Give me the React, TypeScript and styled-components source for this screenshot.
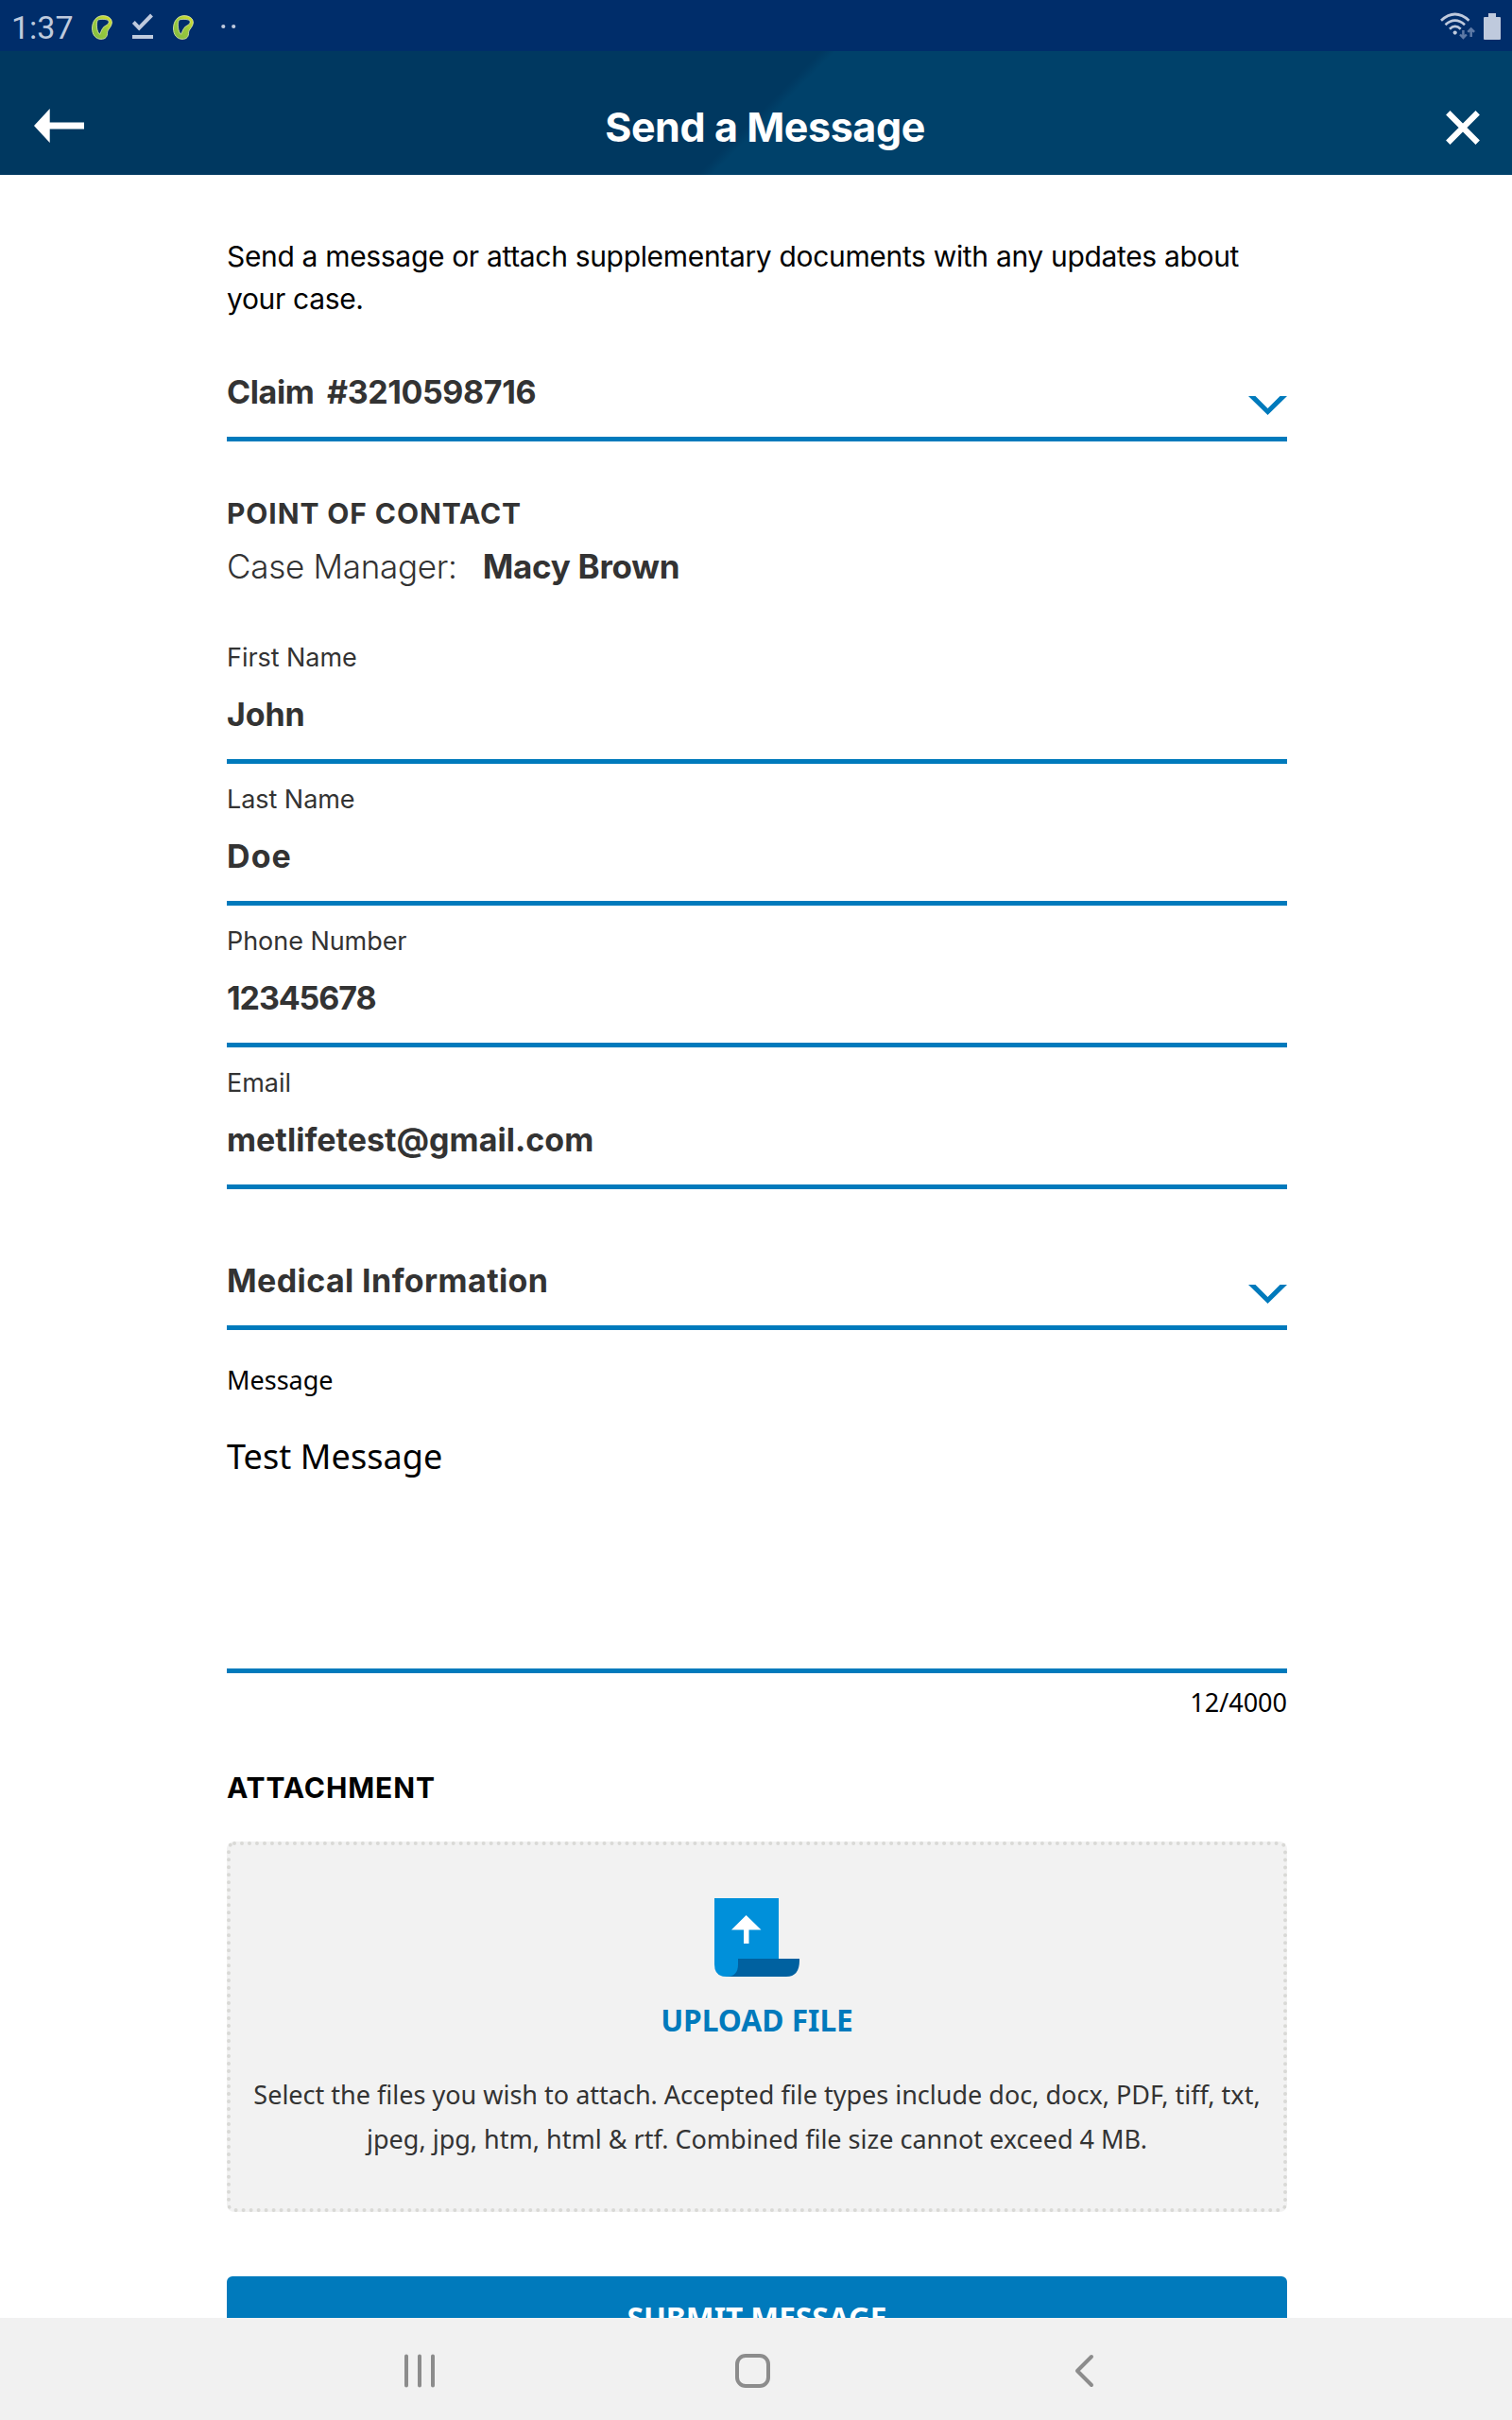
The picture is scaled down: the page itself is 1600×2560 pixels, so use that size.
import React from "react";
import styled, { createGlobalStyle } from "styled-components";

const blue = "#007abc";
const brandFont = `Inter, "Liberation Sans", sans-serif`;
const systemFont = `"Noto Sans", "Liberation Sans", sans-serif`;

const GlobalStyle = createGlobalStyle`
  * { box-sizing: border-box; }
  body { margin: 0; background: #fff; }
  svg { display: block; flex: none; }
`;

const Screen = styled.div`
  width: 1600px;
  height: 2560px;
  display: flex;
  flex-direction: column;
  overflow: hidden;
  background: #fff;
  color: #333;
  font-family: ${brandFont};
`;

const StatusBar = styled.div`
  height: 54px;
  flex: none;
  display: flex;
  justify-content: space-between;
  align-items: flex-start;
  padding: 13px 12px 0 12px;
  background: #002d6a;
  color: #bfcadd;
`;

const StatusGroup = styled.div<{ $gap: number }>`
  display: flex;
  align-items: flex-start;
  gap: ${(p) => p.$gap}px;
`;

const StatusIcon = styled.span`
  padding-top: 3px;
`;

const DotsSlot = styled.span`
  margin-left: 7px;
`;

const Clock = styled.span`
  width: 63px;
  font: 400 34px/32px Roboto, sans-serif;
`;

const AppBar = styled.header`
  height: 131px;
  flex: none;
  display: flex;
  justify-content: space-between;
  align-items: flex-start;
  padding: 54px 34px 0 36px;
  background: linear-gradient(135deg, #003860 50.2%, #00416a 51.1%);
  color: #fff;
`;

const Title = styled.h1`
  margin: 0;
  font-size: 43px;
  line-height: 52px;
  font-weight: 700;
  letter-spacing: -0.42px;
`;

const BarButton = styled.button<{ $top: number }>`
  margin: ${(p) => p.$top}px 0 0;
  padding: 0;
  border: 0;
  background: none;
  color: inherit;
`;

const Main = styled.main`
  flex: 1;
  min-height: 0;
  overflow: hidden;
  padding: 64px 238px 0 240px;
  display: flex;
  flex-direction: column;
`;

const Intro = styled.p`
  margin: 0 0 54px;
  flex: none;
  color: #000;
  font-size: 30px;
  line-height: 45px;
  letter-spacing: -0.33px;
`;

const SelectRow = styled.div`
  flex: none;
  display: flex;
  justify-content: space-between;
  align-items: flex-start;
  height: 74px;
  border-bottom: 5px solid ${blue};
`;

const Value = styled.span<{ $spacing?: number; $wordSpacing?: number }>`
  font-size: 34px;
  line-height: 44px;
  font-weight: 700;
  letter-spacing: ${(p) => p.$spacing ?? 0}px;
  word-spacing: ${(p) => p.$wordSpacing ?? 0}px;
`;

const ChevronBox = styled.span`
  margin-top: 26px;
`;

const SectionTitle = styled.h2<{ $color?: string }>`
  margin: 0;
  flex: none;
  color: ${(p) => p.$color ?? "#333"};
  font-size: 30px;
  line-height: 40px;
  font-weight: 700;
  letter-spacing: 0.89px;
`;

const Contact = styled.section`
  flex: none;
  margin: 56px 0 36px;
  display: flex;
  flex-direction: column;
  gap: 13px;
`;

const Manager = styled.div`
  display: flex;
  gap: 27px;
  font-size: 35px;
  line-height: 46px;
  font-weight: 300;
  letter-spacing: -0.28px;

  strong {
    font-weight: 700;
  }
`;

const FieldList = styled.div`
  flex: none;
  margin-bottom: 75px;
`;

const FieldBox = styled.div`
  height: 150px;
  padding-top: 20px;
  display: flex;
  flex-direction: column;
  gap: 20px;
  border-bottom: 5px solid ${blue};
`;

const FieldLabel = styled.label`
  font-size: 27px;
  line-height: 36px;
  letter-spacing: -0.05px;
`;

const MessageBlock = styled.section`
  flex: none;
  display: flex;
  flex-direction: column;
  margin: 35px 0 52px;
  color: #000;
  font-family: ${systemFont};
  font-size: 27px;
  line-height: 36px;
`;

const MessageText = styled.div`
  height: 254px;
  margin: 38px 0 13px;
  border-bottom: 5px solid ${blue};
  font-size: 36px;
  line-height: 50px;
  letter-spacing: 0.08px;
`;

const Counter = styled.span`
  align-self: flex-end;
`;

const DropZone = styled.div`
  flex: none;
  height: 392px;
  margin: 37px 0 68px;
  padding: 56px 20px 0;
  display: flex;
  flex-direction: column;
  align-items: center;
  border: 4px dotted #d9d9d6;
  border-radius: 8px;
  background: #f2f2f2;
  font-family: ${systemFont};
  text-align: center;
`;

const UploadLabel = styled.span`
  margin: 24px 0 33px;
  color: ${blue};
  font-size: 31.7px;
  line-height: 44px;
  font-weight: 700;
`;

const Hint = styled.p`
  margin: 0;
  font-size: 27px;
  line-height: 47px;
`;

const Submit = styled.button`
  flex: none;
  height: 88px;
  padding: 0;
  border: 0;
  border-radius: 6px;
  background: ${blue};
  color: #fff;
  font: 700 31.6px/44px ${systemFont};
`;

const NavBar = styled.nav`
  height: 108px;
  flex: none;
  display: flex;
  align-items: flex-start;
  gap: 317px;
  padding: 38px 0 0 427px;
  background: #f1f1f1;
`;

const Swirl = ({ id }: { id: string }) => (
  <svg width="22" height="26" viewBox="0 0 22 26">
    <defs>
      <linearGradient id={id} x1="1" y1="0" x2="0.2" y2="1">
        <stop offset="0" stopColor="#dfe32a" />
        <stop offset="0.5" stopColor="#9cca3c" />
        <stop offset="1" stopColor="#84bd41" />
      </linearGradient>
    </defs>
    <path
      fill={`url(#${id})`}
      stroke="#e6efb0"
      strokeWidth="0.8"
      fillRule="evenodd"
      d="M12 .6C5 .6.5 6.500.5 14C.5 21 4.500 25.400 10 25.400C14.500 25.400 16.800 23 16.600 18C16.500 15.500 21.300 12.500 21.400 8C21.400 3.500 17.500.6 12 .6ZM6.300 5.300C8.500 3.800 18.300 3.900 18.300 7C18.300 10.500 13 11 11.300 14.500C10.300 16.800 9.300 18.500 8.600 20.300C5.200 17.500 4.500 9 6.300 5.300Z"
    />
  </svg>
);

const DownloadDone = () => (
  <svg width="22" height="28" viewBox="0 0 22 28">
    <path d="M1.300 10.500L7.200 16.700L20.500 3" fill="none" stroke="currentColor" strokeWidth="4" />
    <path d="M0 24H22V28.500H0Z" fill="currentColor" />
  </svg>
);

const MoreDots = () => (
  <svg width="16" height="28" viewBox="0 0 16 28">
    <circle cx="2.300" cy="15" r="2.100" fill="currentColor" />
    <circle cx="13.200" cy="15" r="2.100" fill="currentColor" />
  </svg>
);

const Wifi = () => (
  <svg width="37" height="30" viewBox="0 0 37 30">
    <g fill="none" stroke="currentColor" strokeWidth="2.700">
      <path d="M1 8.700Q15.700 -4.700 30.500 8.700" />
      <path d="M5.500 13.200Q15.700 4.200 26 13.200" />
      <path d="M10 17.700Q15.700 12.200 21.700 17.700" />
    </g>
    <circle cx="15.700" cy="21.600" r="2.100" fill="currentColor" />
    <g fill="none" stroke="#5e7aa6" strokeWidth="2.500">
      <path d="M24.400 19V27M21 23.500L24.400 27L27.800 23.500" />
      <path d="M32.700 26V18M29.300 20.800L32.700 17.400L36.100 20.800" />
    </g>
  </svg>
);

const Battery = () => (
  <svg width="18" height="29" viewBox="0 0 18 29">
    <path d="M5 1H13V5H17Q18 5 18 6V28Q18 29 17 29H1Q0 29 0 28V6Q0 5 1 5H5Z" fill="currentColor" />
  </svg>
);

const BackArrow = () => (
  <svg width="53" height="36" viewBox="0 0 53 36">
    <path d="M0 18L16.700 0V14.500H53V21.500H16.700V36Z" fill="currentColor" />
  </svg>
);

const Close = () => (
  <svg width="36" height="36" viewBox="0 0 36 36">
    <path d="M2.300 2.300L33.700 33.700M33.700 2.300L2.300 33.700" stroke="currentColor" strokeWidth="6.200" />
  </svg>
);

const Chevron = () => (
  <ChevronBox>
    <svg width="41" height="20" viewBox="0 0 41 20">
      <path d="M0 0H7.500L20.500 13L33.500 0H41L20.500 20Z" fill={blue} />
    </svg>
  </ChevronBox>
);

const UploadIcon = () => (
  <svg width="90" height="83" viewBox="0 0 90 83">
    <path d="M18 64H90V66Q90 83 76 83H12Z" fill="#0061a0" />
    <path d="M0 0H68V64H25V70Q25 83 12.500 83Q0 83 0 70Z" fill="#0090da" />
    <path d="M33.600 18L49.500 33.500H36.500V48H31V33.500H18Z" fill="#fff" />
  </svg>
);

const Recents = () => (
  <svg width="34" height="36" viewBox="0 0 34 36">
    <path d="M3 2.500V33.500M17 2.500V33.500M31 2.500V33.500" stroke="#8c8c8c" strokeWidth="4" strokeLinecap="round" />
  </svg>
);

const Home = () => (
  <svg width="38" height="36" viewBox="0 0 38 36">
    <rect x="2" y="2" width="33" height="32" rx="9" fill="none" stroke="#8c8c8c" strokeWidth="4" />
  </svg>
);

const Back = () => (
  <svg width="25" height="36" viewBox="0 0 25 36">
    <path d="M22 3L7 18L22 33" fill="none" stroke="#8c8c8c" strokeWidth="4" strokeLinecap="round" strokeLinejoin="round" />
  </svg>
);

const fields = [
  { label: "First Name", value: "John", spacing: -0.1 },
  { label: "Last Name", value: "Doe", spacing: 1.1 },
  { label: "Phone Number", value: "12345678", spacing: -1.1 },
  { label: "Email", value: "metlifetest@gmail.com", spacing: 0.03 },
];

export default function App() {
  return (
    <Screen>
      <GlobalStyle />
      <StatusBar>
        <StatusGroup $gap={22}>
          <Clock>1:37</Clock>
          <StatusGroup $gap={21}>
            <StatusIcon><Swirl id="swirl-a" /></StatusIcon>
            <DownloadDone />
            <StatusIcon><Swirl id="swirl-b" /></StatusIcon>
          </StatusGroup>
          <DotsSlot><MoreDots /></DotsSlot>
        </StatusGroup>
        <StatusGroup $gap={9}>
          <Wifi />
          <Battery />
        </StatusGroup>
      </StatusBar>
      <AppBar>
        <BarButton $top={7}><BackArrow /></BarButton>
        <Title>Send a Message</Title>
        <BarButton $top={9}><Close /></BarButton>
      </AppBar>
      <Main>
        <Intro>
          Send a message or attach supplementary documents with any updates about your case.
        </Intro>
        <SelectRow>
          <Value $spacing={-0.4} $wordSpacing={6}>Claim #3210598716</Value>
          <Chevron />
        </SelectRow>
        <Contact>
          <SectionTitle>POINT OF CONTACT</SectionTitle>
          <Manager>
            <span>Case Manager:</span>
            <strong>Macy Brown</strong>
          </Manager>
        </Contact>
        <FieldList>
          {fields.map((f) => (
            <FieldBox key={f.label}>
              <FieldLabel>{f.label}</FieldLabel>
              <Value $spacing={f.spacing}>{f.value}</Value>
            </FieldBox>
          ))}
        </FieldList>
        <SelectRow>
          <Value $spacing={0.4}>Medical Information</Value>
          <Chevron />
        </SelectRow>
        <MessageBlock>
          <label>Message</label>
          <MessageText>Test Message</MessageText>
          <Counter>12/4000</Counter>
        </MessageBlock>
        <SectionTitle $color="#000">ATTACHMENT</SectionTitle>
        <DropZone>
          <UploadIcon />
          <UploadLabel>UPLOAD FILE</UploadLabel>
          <Hint>
            Select the files you wish to attach. Accepted file types include doc, docx, PDF, tiff,
            txt, jpeg, jpg, htm, html &amp; rtf. Combined file size cannot exceed 4 MB.
          </Hint>
        </DropZone>
        <Submit>SUBMIT MESSAGE</Submit>
      </Main>
      <NavBar>
        <Recents />
        <Home />
        <Back />
      </NavBar>
    </Screen>
  );
}
